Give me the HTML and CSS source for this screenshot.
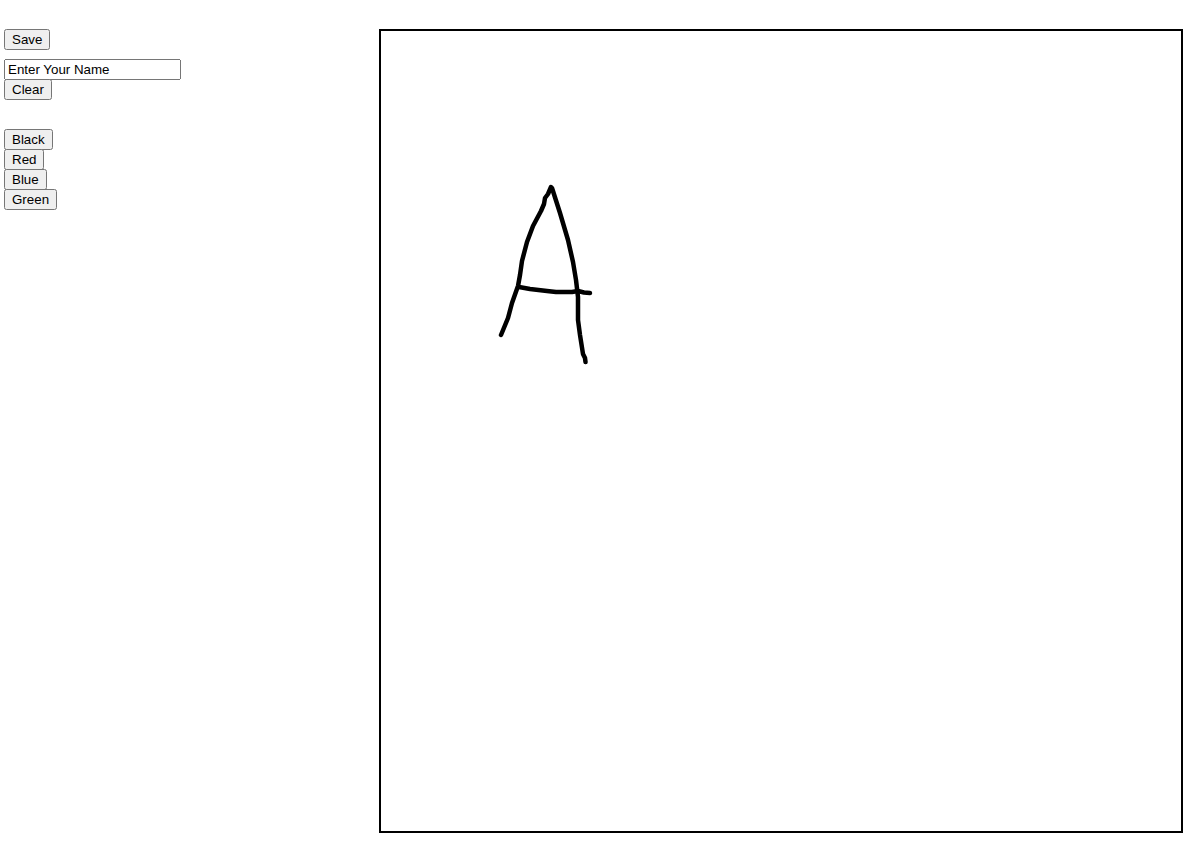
FILE: index.html
```html
<!DOCTYPE html>
<html lang="en">

<head>
    <meta name="viewport" content="width=device-width, initial-scale=1.0">
    <link rel="stylesheet" href="styles.css">
    <title>Drawing Board</title>
</head>

<body>
    <div class="controls">
        <button class="btn save-btn">Save</button>
        <input class="name-input" type="text" value="Enter Your Name">
        <button class="btn">Clear</button>

        <div class="colors">
            <button class="btn">Black</button>
            <button class="btn">Red</button>
            <button class="btn">Blue</button>
            <button class="btn">Green</button>
        </div>
    </div>

    <div class="board">
        <svg class="sketch" viewBox="0 0 800 800">
            <!-- left leg and right leg -->
            <polyline points="120,304 127,287 131,272 137,255 139,244 141,230 146,211 152,195 160,180 163,173 164,167 167,163 170,156 171,157 179,182 187,209 192,231 195,249 197,266 197,289 199,304 202,323 204,327 204.500,331"></polyline>
            <!-- cross bar -->
            <polyline points="138,256 149,258 166,260 175,261 191,261 197,260 203,261.500 209,262"></polyline>
        </svg>
    </div>
</body>

</html>
```

FILE: styles.css
```css
body {
    font-family: "Liberation Sans", Arial, sans-serif;
    font-size: 13.333px;
    margin: 0;
    padding: 29px 4px 0;
    display: flex;
}

.controls {
    width: 375px;
    flex-shrink: 0;
    display: flex;
    flex-direction: column;
    align-items: flex-start;
}

.btn {
    font-family: "Liberation Sans", Arial, sans-serif;
    font-size: 13.333px;
    height: 21px;
    margin-top: -1px;
    display: block;
}

.save-btn {
    margin-top: 0;
    margin-bottom: 9px;
}

.name-input {
    font-family: "Liberation Sans", Arial, sans-serif;
    font-size: 13.333px;
    width: 177px;
    height: 21px;
    box-sizing: border-box;
}

.colors {
    margin-top: 30px;
    display: flex;
    flex-direction: column;
    align-items: flex-start;
}

.board {
    width: 800px;
    height: 800px;
    border: 2px solid black;
    background-color: white;
}

.sketch {
    display: block;
    width: 800px;
    height: 800px;
}

.sketch polyline {
    fill: none;
    stroke: black;
    stroke-width: 4.5;
    stroke-linecap: round;
    stroke-linejoin: round;
}
```
